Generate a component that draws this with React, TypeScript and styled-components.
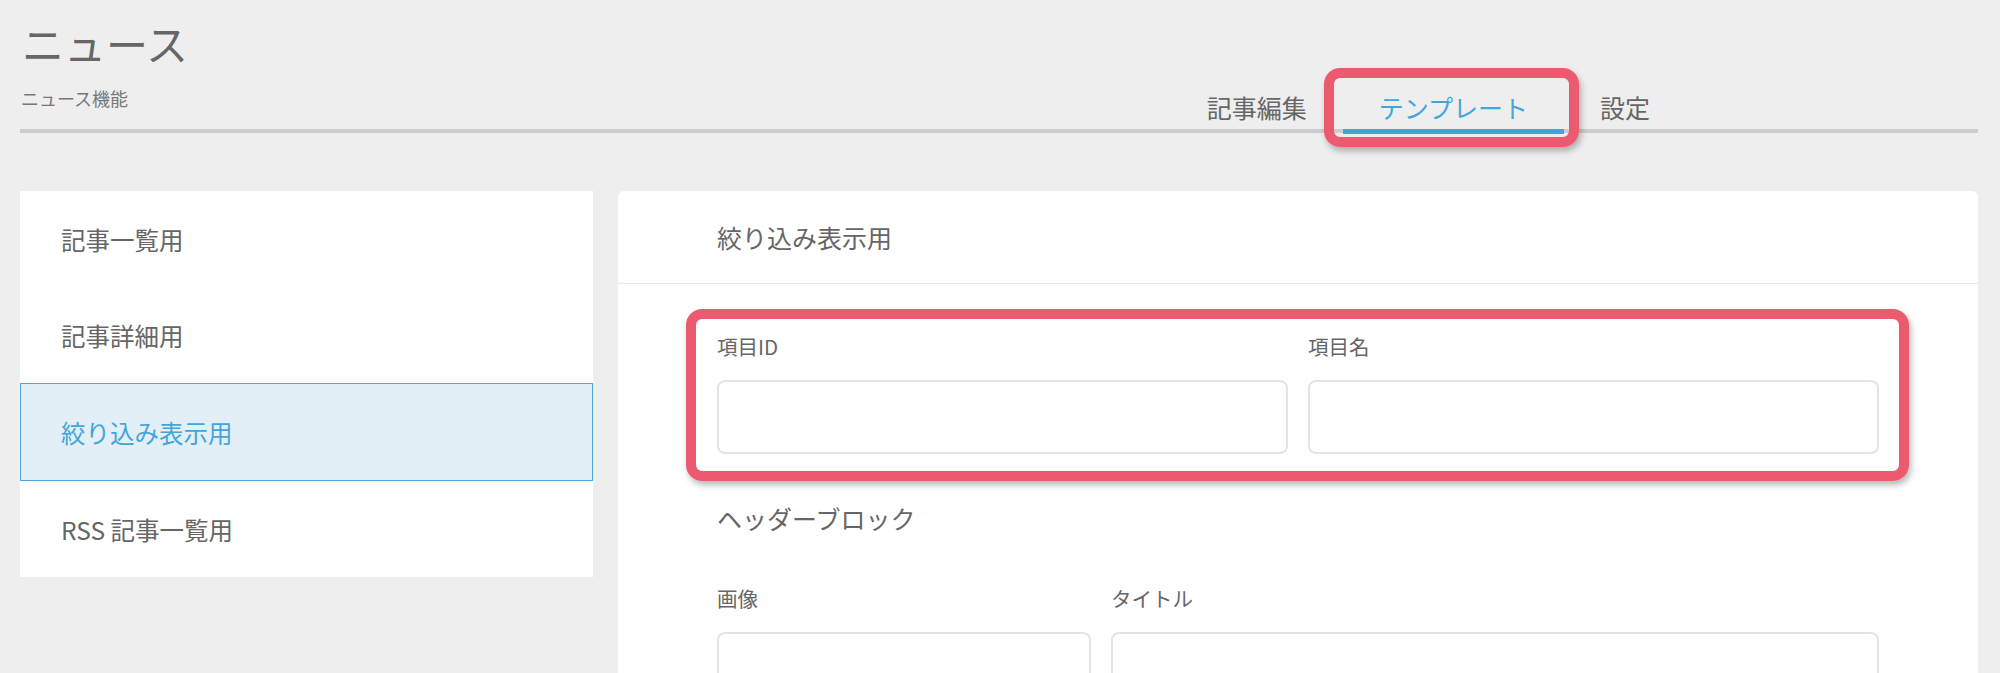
import styled, { createGlobalStyle } from "styled-components"

const GlobalStyle = createGlobalStyle`
    html, body {
        margin: 0;
        padding: 0;
        background: #eeeeee;
    }
    body {
        font-family: "Noto Sans CJK JP", "Noto Sans", sans-serif;
        color: #666;
    }
    * {
        box-sizing: border-box;
    }
`

const Page = styled.div`
    padding: 18px 22px 0 20px;
    min-height: 673px;
`

const PageHeader = styled.header`
    display: flex;
    align-items: flex-end;
    border-bottom: 4px solid #cccccc;
`

const TitleBlock = styled.div`
    margin-bottom: 19px;
`

const Title = styled.h1`
    margin: 0 0 0 2px;
    font-size: 42px;
    line-height: 50px;
    font-weight: 400;
    color: #666;
`

const SubTitle = styled.p`
    margin: 18px 0 0 1px;
    font-size: 18px;
    line-height: 24px;
    color: #777;
`

const Tabs = styled.nav`
    display: flex;
    margin-left: auto;
    margin-right: 292px;
    margin-bottom: -5px;
`

const Tab = styled.div<{ $active?: boolean }>`
    position: relative;
    padding: 0 36px 4px;
    font-size: 25px;
    line-height: 36px;
    color: ${p => (p.$active ? "#43a6da" : "#666")};
    border-bottom: 5px solid ${p => (p.$active ? "#3aa7db" : "transparent")};
`

const Highlight = styled.div<{ $t: number; $r: number; $b: number; $l: number }>`
    position: absolute;
    top: ${p => p.$t}px;
    right: ${p => p.$r}px;
    bottom: ${p => p.$b}px;
    left: ${p => p.$l}px;
    border: 10px solid #eb5a6e;
    border-radius: 16px;
    box-shadow: 2px 4px 6px rgba(0, 0, 0, 0.28);
    pointer-events: none;
`

const Body = styled.div`
    display: grid;
    grid-template-columns: 573px 1fr;
    gap: 25px;
    margin-top: 58px;
    align-items: start;
`

const SideMenu = styled.ul`
    list-style: none;
    margin: 0;
    padding: 0;
    background: #fff;
`

const MenuItem = styled.li<{ $active?: boolean }>`
    display: flex;
    align-items: center;
    height: ${p => (p.$active ? 98 : 96)}px;
    padding-left: ${p => (p.$active ? 40 : 41)}px;
    font-size: 24.5px;
    color: ${p => (p.$active ? "#45a5d9" : "#666")};
    background: ${p => (p.$active ? "#e2eff6" : "#fff")};
    border: ${p => (p.$active ? "1px solid #4aa8db" : "none")};
`

const Panel = styled.section`
    background: #fff;
    border-radius: 6px 6px 0 0;
    min-height: 520px;
`

const PanelHead = styled.div`
    display: flex;
    align-items: center;
    height: 93px;
    padding: 0 99px;
    border-bottom: 1px solid #e8e8e8;
    font-size: 25px;
`

const PanelBody = styled.div`
    padding: 48px 99px 0;
`

const FieldGroup = styled.div<{ $cols: string }>`
    position: relative;
    display: grid;
    grid-template-columns: ${p => p.$cols};
    column-gap: 20px;
`

const Field = styled.div`
    display: flex;
    flex-direction: column;
`

const Label = styled.label`
    font-size: 20.5px;
    line-height: 28px;
    color: #666;
`

const Input = styled.input`
    margin-top: 20px;
    height: 74px;
    border: 2px solid #e2e4e7;
    border-radius: 8px;
    font: inherit;
    outline: none;
`

const BlockTitle = styled.h2`
    margin: 47px 0 49px;
    font-size: 25px;
    line-height: 34px;
    font-weight: 400;
    color: #666;
`

const menu = ["記事一覧用", "記事詳細用", "絞り込み表示用", "RSS 記事一覧用"]

const App = () => {
    return (
        <>
            <GlobalStyle />
            <Page>
                <PageHeader>
                    <TitleBlock>
                        <Title>ニュース</Title>
                        <SubTitle>ニュース機能</SubTitle>
                    </TitleBlock>
                    <Tabs>
                        <Tab>記事編集</Tab>
                        <Tab $active>
                            テンプレート
                            <Highlight $t={-21} $r={-15} $b={-18} $l={-19} />
                        </Tab>
                        <Tab>設定</Tab>
                    </Tabs>
                </PageHeader>
                <Body>
                    <SideMenu>
                        {menu.map(m => (
                            <MenuItem key={m} $active={m === "絞り込み表示用"}>{m}</MenuItem>
                        ))}
                    </SideMenu>
                    <Panel>
                        <PanelHead>絞り込み表示用</PanelHead>
                        <PanelBody>
                            <FieldGroup $cols="1fr 1fr">
                                <Field>
                                    <Label>項目ID</Label>
                                    <Input />
                                </Field>
                                <Field>
                                    <Label>項目名</Label>
                                    <Input />
                                </Field>
                                <Highlight $t={-23} $r={-30} $b={-27} $l={-31} />
                            </FieldGroup>
                            <BlockTitle>ヘッダーブロック</BlockTitle>
                            <FieldGroup $cols="374px 1fr">
                                <Field>
                                    <Label>画像</Label>
                                    <Input />
                                </Field>
                                <Field>
                                    <Label>タイトル</Label>
                                    <Input />
                                </Field>
                            </FieldGroup>
                        </PanelBody>
                    </Panel>
                </Body>
            </Page>
        </>
    )
}

export default App
